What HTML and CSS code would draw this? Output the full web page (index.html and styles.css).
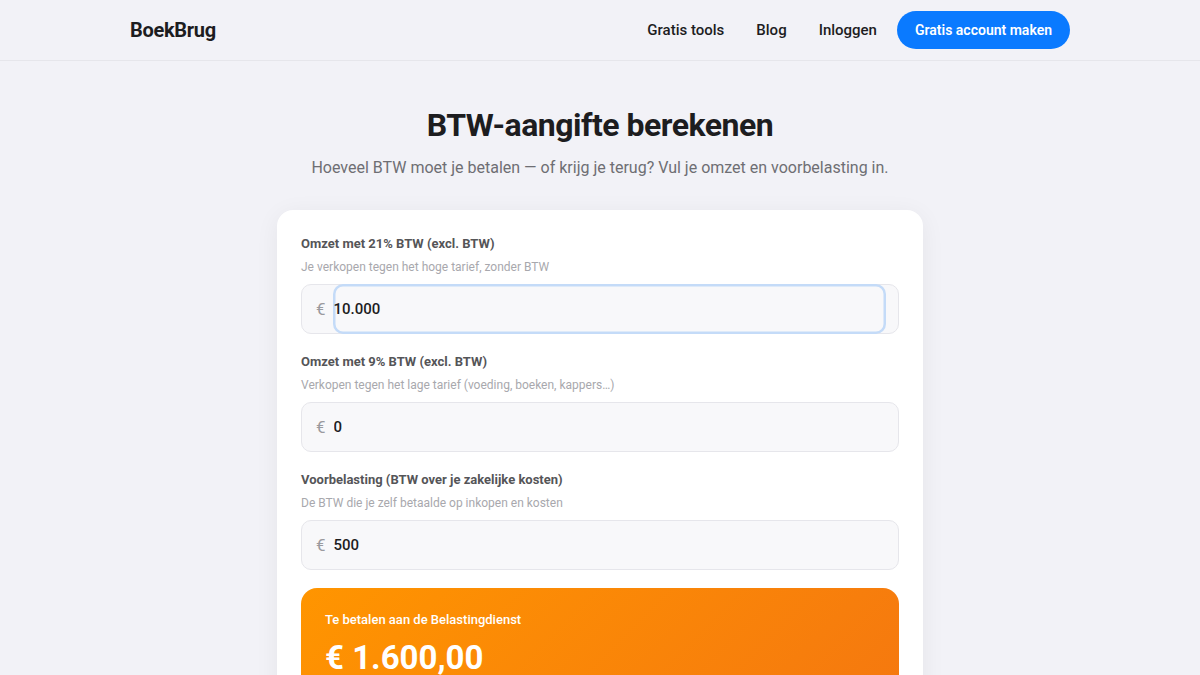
FILE: index.html
```html
<!DOCTYPE html>
<html lang="nl">
<head>
    <meta charset="UTF-8">
    <meta name="viewport" content="width=device-width, initial-scale=1.0">
    <title>BTW-aangifte berekenen - BoekBrug</title>
    <link rel="stylesheet" href="styles.css">
</head>
<body>
    <header class="site-header">
        <div class="header-inner">
            <a class="logo" href="#">BoekBrug</a>
            <nav class="nav">
                <a href="#">Gratis tools</a>
                <a href="#">Blog</a>
                <a href="#">Inloggen</a>
                <a class="nav-cta" href="#">Gratis account maken</a>
            </nav>
        </div>
    </header>

    <main class="page">
        <h1 class="page-title">BTW-aangifte berekenen</h1>
        <p class="page-intro">Hoeveel BTW moet je betalen — of krijg je terug? Vul je omzet en voorbelasting in.</p>

        <div class="calc-card">
            <div class="field">
                <label class="field-label" for="omzet21">Omzet met 21% BTW (excl. BTW)</label>
                <div class="field-hint">Je verkopen tegen het hoge tarief, zonder BTW</div>
                <div class="input-wrap">
                    <span class="prefix">€</span>
                    <input class="money-input is-focused" id="omzet21" type="text" value="10.000">
                </div>
            </div>
            <div class="field">
                <label class="field-label" for="omzet9">Omzet met 9% BTW (excl. BTW)</label>
                <div class="field-hint">Verkopen tegen het lage tarief (voeding, boeken, kappers…)</div>
                <div class="input-wrap">
                    <span class="prefix">€</span>
                    <input class="money-input" id="omzet9" type="text" value="0">
                </div>
            </div>
            <div class="field">
                <label class="field-label" for="voorbelasting">Voorbelasting (BTW over je zakelijke kosten)</label>
                <div class="field-hint">De BTW die je zelf betaalde op inkopen en kosten</div>
                <div class="input-wrap">
                    <span class="prefix">€</span>
                    <input class="money-input" id="voorbelasting" type="text" value="500">
                </div>
            </div>

            <div class="result">
                <div class="result-label" id="resultLabel">Te betalen aan de Belastingdienst</div>
                <div class="result-amount" id="resultAmount">€ 1.600,00</div>
            </div>
        </div>
    </main>

    <script>
        const inputs = document.querySelectorAll('.money-input');
        const resultLabel = document.getElementById('resultLabel');
        const resultAmount = document.getElementById('resultAmount');

        function parseAmount(value) {
            return parseFloat(value.replace(/\./g, '').replace(',', '.')) || 0;
        }

        function formatEuro(n) {
            return '€ ' + n.toLocaleString('nl-NL', { minimumFractionDigits: 2, maximumFractionDigits: 2 });
        }

        function calculate() {
            const o21 = parseAmount(inputs[0].value);
            const o9 = parseAmount(inputs[1].value);
            const vb = parseAmount(inputs[2].value);
            const total = o21 * 0.21 + o9 * 0.09 - vb;
            resultLabel.textContent = total >= 0 ? 'Te betalen aan de Belastingdienst' : 'Je krijgt terug van de Belastingdienst';
            resultAmount.textContent = formatEuro(Math.abs(total));
        }

        inputs.forEach(input => input.addEventListener('input', calculate));
    </script>
</body>
</html>
```

FILE: styles.css
```css
* {
    box-sizing: border-box;
}
body {
    margin: 0;
    font-family: Roboto, "Liberation Sans", Arial, sans-serif;
    background: #f2f2f7;
    color: #1d1d1f;
}
a {
    text-decoration: none;
    color: inherit;
}
.site-header {
    height: 61px;
    border-bottom: 1px solid #e6e6eb;
}
.header-inner {
    max-width: 940px;
    height: 60px;
    margin: 0 auto;
    display: flex;
    align-items: center;
    justify-content: space-between;
}
.logo {
    font-size: 20px;
    font-weight: 700;
    letter-spacing: -0.3px;
    color: #1d1d1f;
}
.nav {
    display: flex;
    align-items: center;
    gap: 32px;
    font-size: 15px;
    font-weight: 500;
}
.nav-cta {
    margin-left: -12px;
    height: 38px;
    padding: 0 18px;
    display: flex;
    align-items: center;
    border-radius: 19px;
    background: #0a7aff;
    color: #fff;
    font-size: 14px;
    font-weight: 600;
}
.page {
    max-width: 646px;
    margin: 0 auto;
    padding-top: 45px;
}
.page-title {
    margin: 0;
    font-size: 32px;
    line-height: 38px;
    font-weight: 700;
    text-align: center;
    letter-spacing: -0.5px;
}
.page-intro {
    margin: 12px 0 30px;
    font-size: 16px;
    line-height: 24px;
    color: #6e6e73;
    text-align: center;
}
.calc-card {
    background: #fff;
    border-radius: 16px;
    padding: 24px;
    box-shadow: 0 4px 24px rgba(0, 0, 0, 0.06);
    display: flex;
    flex-direction: column;
    gap: 18px;
}
.field-label {
    display: block;
    font-size: 13px;
    line-height: 19px;
    font-weight: 700;
    color: #555558;
}
.field-hint {
    margin-top: 6px;
    font-size: 12px;
    line-height: 16px;
    color: #a8a8ad;
}
.input-wrap {
    margin-top: 9px;
    height: 50px;
    display: flex;
    align-items: center;
    gap: 7px;
    padding-left: 14px;
    padding-right: 12px;
    background: #f8f8fa;
    border: 1px solid #e6e6eb;
    border-radius: 10px;
}
.prefix {
    font-size: 17px;
    color: #9a9a9f;
}
.money-input {
    flex: 1;
    height: 50px;
    margin: -1px 0;
    padding: 0 1px;
    border: none;
    background: transparent;
    font-family: inherit;
    font-size: 15px;
    font-weight: 500;
    color: #1d1d1f;
    border-radius: 10px;
    outline: none;
}
.money-input.is-focused,
.money-input:focus {
    box-shadow: inset 0 0 0 2.5px #c4dbf8;
}
.result {
    border-radius: 16px;
    padding: 23px 24px 22px;
    background: linear-gradient(135deg, #ff9500 0%, #f5780f 100%);
    color: #fff;
}
.result-label {
    font-size: 13px;
    line-height: 18px;
    font-weight: 500;
}
.result-amount {
    margin-top: 7px;
    font-size: 33px;
    line-height: 43px;
    font-weight: 700;
}
```
